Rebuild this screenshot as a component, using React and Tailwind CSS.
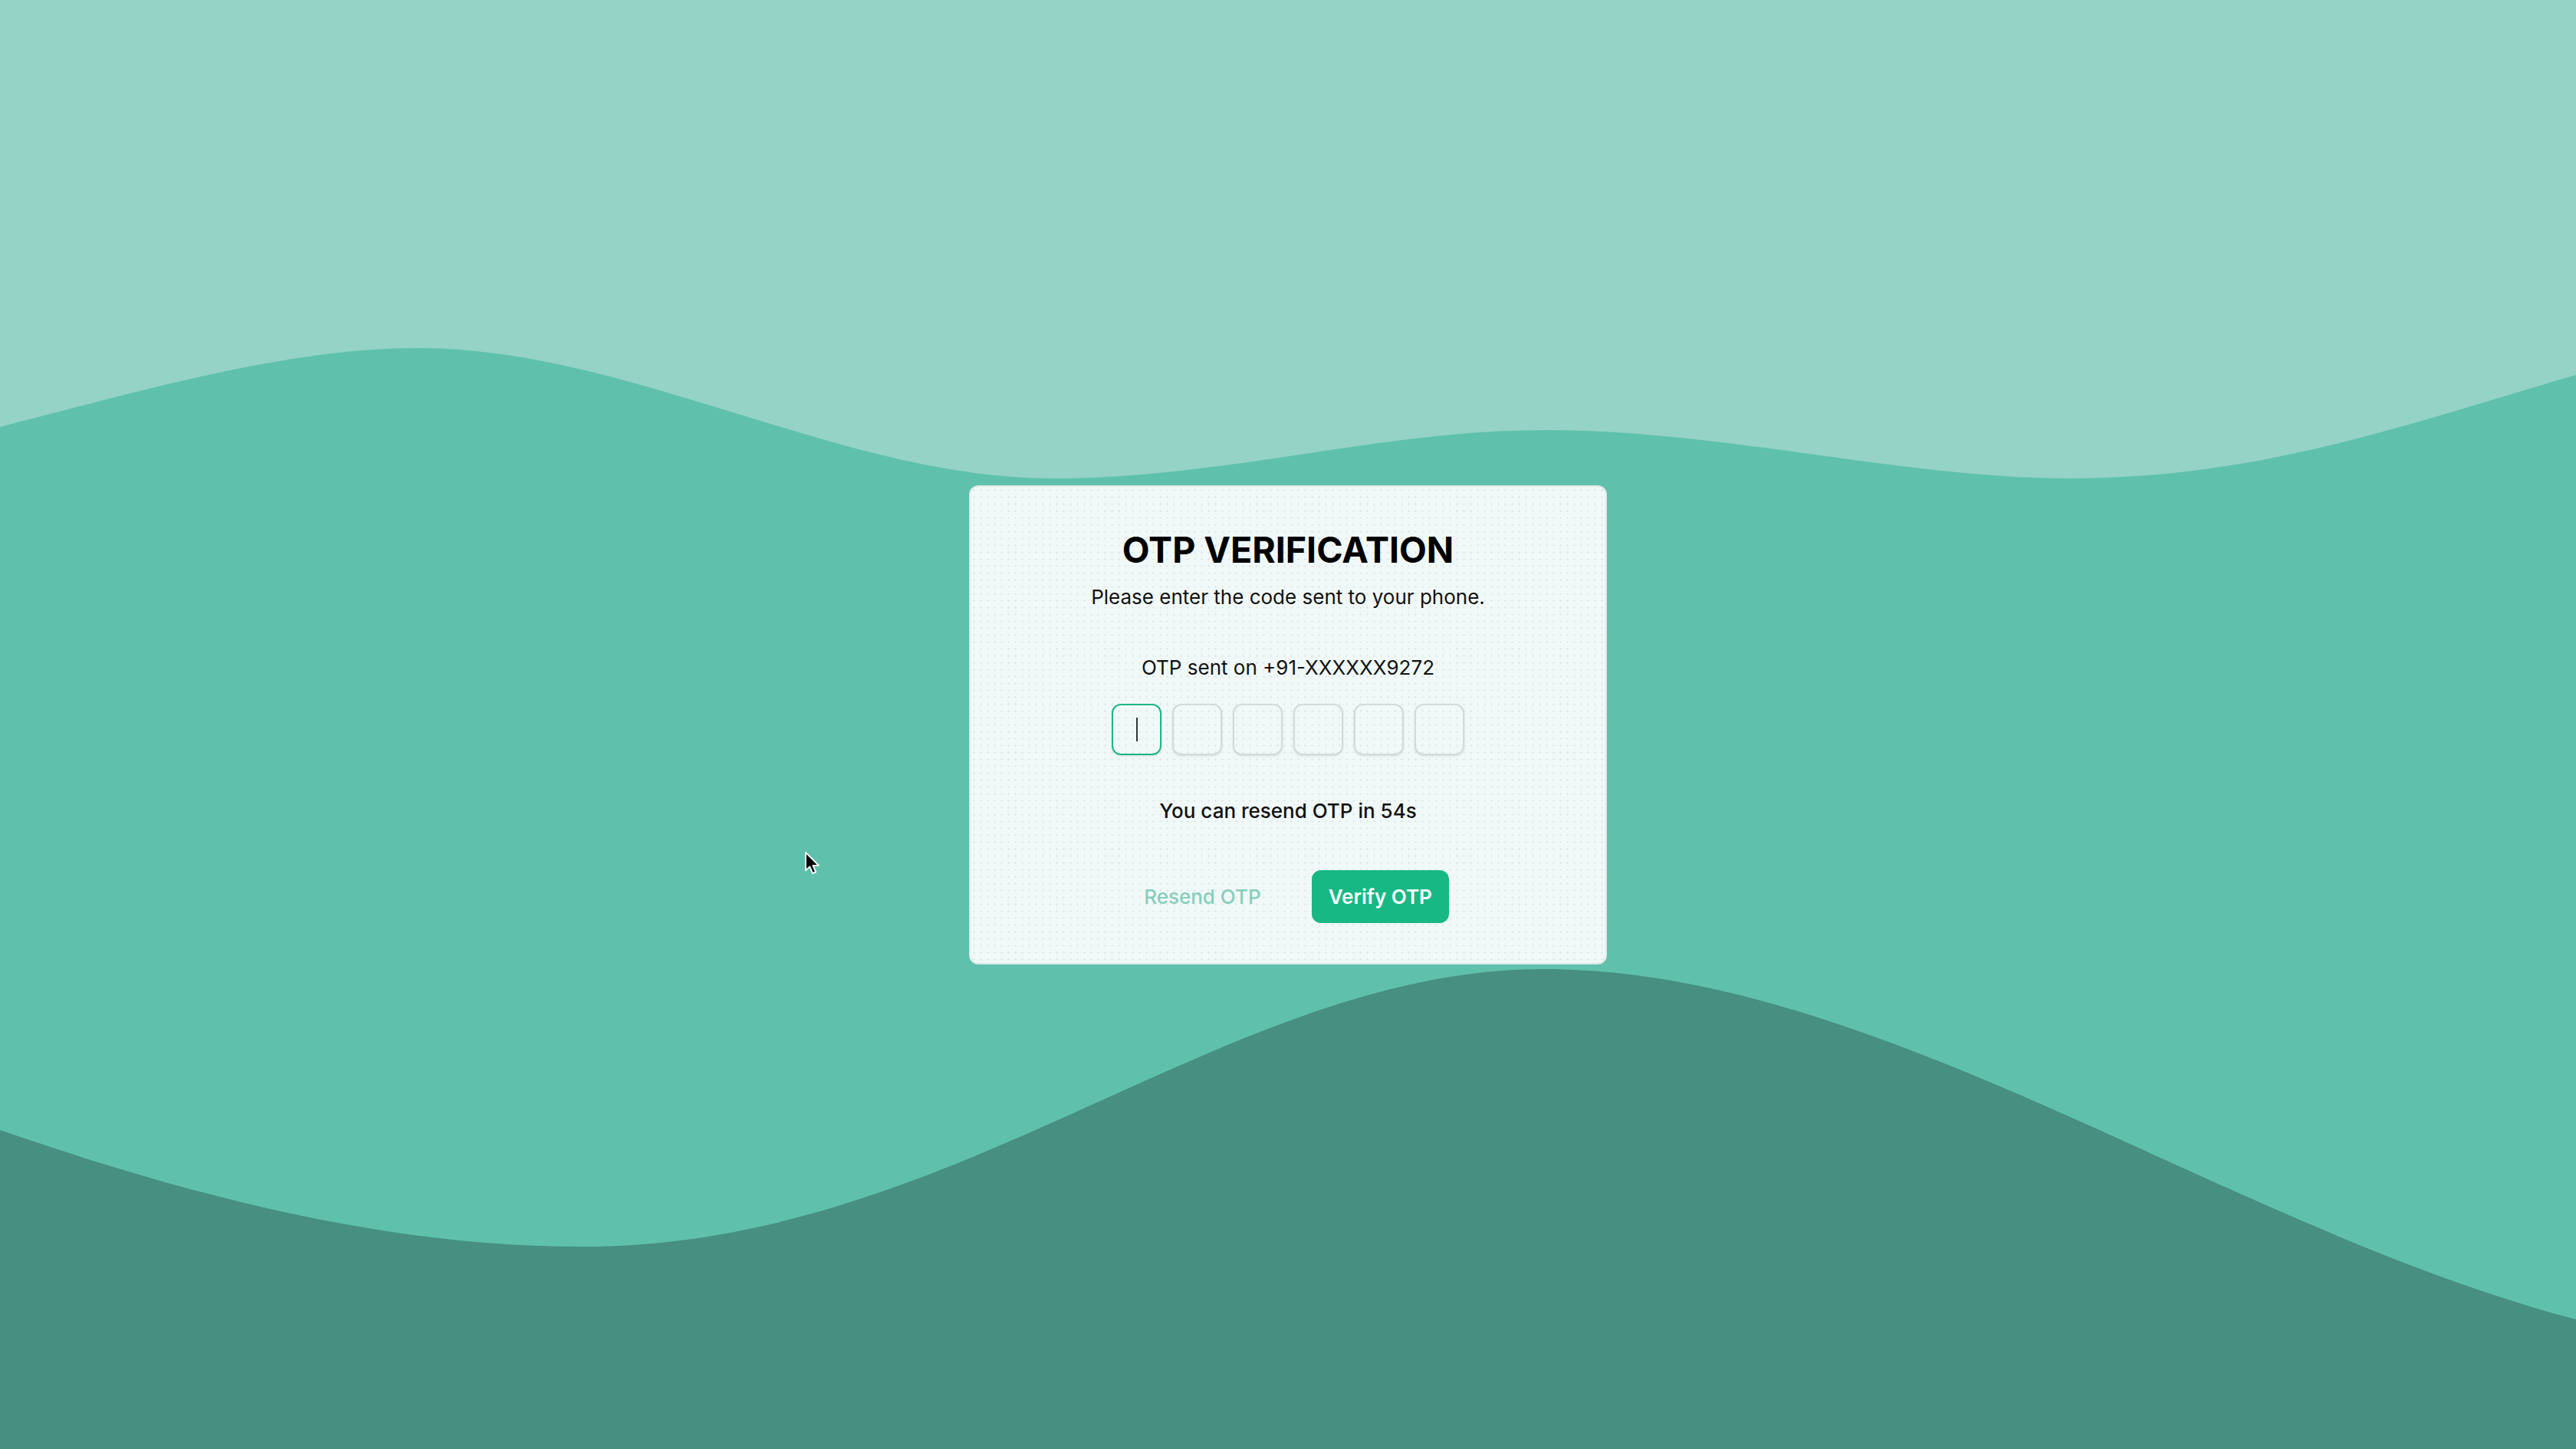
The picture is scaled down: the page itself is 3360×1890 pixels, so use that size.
import React from "react";

const OTP_LENGTH = 6;

/* background waves, drawn in page pixels */
const Waves = () => (
  <svg
    className="absolute inset-0 h-full w-full"
    viewBox="0 0 3360 1890"
    preserveAspectRatio="none"
  >
    <path
      d="M0,557 C200,505 380,454 546,454 C820,454 1100,624 1371,624 C1600,624 1800,561 2014,561 C2250,561 2480,624 2700,624 C2950,624 3150,550 3360,489 L3360,0 L0,0 Z"
      fill="#95d3c6"
    />
    <path
      d="M0,1474 C250,1560 500,1626 760,1626 C1250,1626 1600,1264 2014,1264 C2450,1264 2900,1600 3360,1721 L3360,1890 L0,1890 Z"
      fill="#478f80"
    />
  </svg>
);

const Pointer = () => (
  <svg
    className="absolute left-[1049px] top-[1110px]"
    width="22"
    height="32"
    viewBox="0 0 14 20"
  >
    <path
      d="M1.2 1 L1.2 16 L4.6 12.8 L7 18.4 L9.6 17.3 L7.2 11.8 L12 11.8 Z"
      fill="#000"
      stroke="#fff"
      strokeWidth="1.2"
      strokeLinejoin="round"
    />
  </svg>
);

const App = () => {
  const boxes = Array.from({ length: OTP_LENGTH });

  return (
    <div className="relative flex h-screen w-full items-center justify-center overflow-hidden bg-[#5fc1ab] font-['Inter','Liberation_Sans',sans-serif]">
      <Waves />

      {/* CARD */}
      <div className="relative flex w-[832px] flex-col items-center rounded-[12px] border-2 border-[#e0e8e7] bg-[#f1f9f8] bg-[radial-gradient(#dce9e7_1px,transparent_1.2px)] bg-[size:9px_9px] px-10 pt-[50px] pb-[52px] text-center">
        <h1 className="text-[46.5px] leading-[64px] font-bold text-black">
          OTP VERIFICATION
        </h1>
        <p className="mt-[10px] text-[26px] leading-[40px] text-[#111]">
          Please enter the code sent to your phone.
        </p>

        <p className="mt-[52px] text-[26px] leading-[40px] text-[#111]">
          OTP sent on +91-XXXXXX9272
        </p>

        {/* OTP INPUTS */}
        <div className="mt-[27px] flex gap-[14px]">
          {boxes.map((_, i) => (
            <div
              key={i}
              className={`flex h-[67px] w-[65px] items-center justify-center rounded-[12px] border-2 shadow-sm ${
                i === 0 ? "border-[#19b886]" : "border-[#d3d9dd]"
              }`}
            >
              {i === 0 && <div className="h-[31px] w-[2px] bg-[#333]" />}
            </div>
          ))}
        </div>

        <p className="mt-[53px] text-[26px] leading-[40px] font-medium text-[#111]">
          You can resend OTP in 54s
        </p>

        {/* ACTIONS */}
        <div className="mt-[57px] flex items-center gap-[44px]">
          <button className="h-[69px] px-[22px] text-[26px] font-medium text-[#86cfbb]">
            Resend OTP
          </button>
          <button className="h-[69px] rounded-[12px] bg-[#17b884] px-[22px] text-[26px] font-semibold text-white">
            Verify OTP
          </button>
        </div>
      </div>

      <Pointer />
    </div>
  );
};

export default App;
